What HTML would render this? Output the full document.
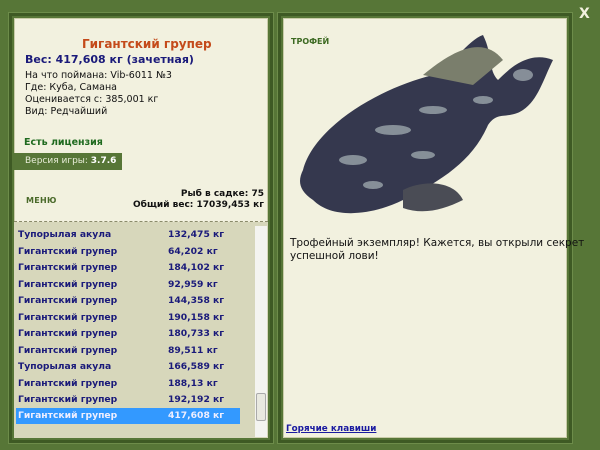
<!DOCTYPE html>
<html><head><meta charset="utf-8"><style>
*{margin:0;padding:0;box-sizing:border-box}
body{width:600px;height:450px;background:#577637;font-family:Tahoma,"DejaVu Sans","Liberation Sans",sans-serif;position:relative;overflow:hidden}
.frame{position:absolute;border:3px solid #3e5a24;box-shadow:0 0 0 1px #6d8c4a}
.in{position:absolute;background:#f2f1df;border:1px solid #c9cca8}
.a{position:absolute;white-space:nowrap}
.b{font-weight:bold}
.row{position:absolute;left:16px;width:224px;height:16px;font-size:9.2px;font-weight:bold;color:#1a1a7a;line-height:16px}
.row span{position:absolute;left:2px}
.row i{font-style:normal;position:absolute;left:152px}
</style></head><body>
<div class="frame" style="left:9px;top:13px;width:264px;height:430px"></div>
<div class="in" style="left:14px;top:18px;width:254px;height:420px"></div>
<div class="frame" style="left:278px;top:13px;width:294px;height:430px"></div>
<div class="in" style="left:283px;top:18px;width:284px;height:420px"></div>
<div class="a b" style="left:579px;top:6px;color:#f2f1df;font-size:14px">X</div>

<div class="a" style="left:82px;top:37px;color:#c44a1a;font-size:12px;font-weight:bold">Гигантский групер</div>
<div class="a b" style="left:25px;top:53px;color:#1a1a7a;font-size:11px">Вес: 417,608 кг (зачетная)</div>
<div class="a" style="left:25px;top:70px;font-size:9.5px;line-height:12px;color:#111">На что поймана: Vib-6011 №3<br>Где: Куба, Самана<br>Оценивается с: 385,001 кг<br>Вид: Редчайший</div>
<div class="a b" style="left:24px;top:137px;color:#1f6a1f;font-size:9.5px">Есть лицензия</div>
<div class="a" style="left:14px;top:153px;width:108px;height:17px;background:#577637;color:#e8edd8;font-size:9px;line-height:17px;padding-left:11px">Версия игры: <b style="color:#fff">3.7.6</b></div>
<div class="a b" style="left:26px;top:196px;color:#4a6a2a;font-size:8px;letter-spacing:0.3px">МЕНЮ</div>
<div class="a b" style="left:110px;top:189px;width:154px;text-align:right;font-size:9px;line-height:11px;color:#111">Рыб в садке: 75<br>Общий вес: 17039,453 кг</div>
<div class="a" style="left:14px;top:221px;width:254px;border-top:1px dashed #8a8a6a"></div>
<div class="a" style="left:14px;top:222px;width:254px;height:216px;background:#d7d7bb"></div>
<div class="a" style="left:255px;top:226px;width:12px;height:211px;background:#f4f4f0"></div>
<div class="a" style="left:256px;top:393px;width:10px;height:28px;background:#e9e9e0;border:1px solid #aaa;border-radius:2px"></div>
<div class="row" style="top:227px"><span>Тупорылая акула</span><i>132,475 кг</i></div>
<div class="row" style="top:243.5px"><span>Гигантский групер</span><i>64,202 кг</i></div>
<div class="row" style="top:260px"><span>Гигантский групер</span><i>184,102 кг</i></div>
<div class="row" style="top:276.5px"><span>Гигантский групер</span><i>92,959 кг</i></div>
<div class="row" style="top:293px"><span>Гигантский групер</span><i>144,358 кг</i></div>
<div class="row" style="top:309.5px"><span>Гигантский групер</span><i>190,158 кг</i></div>
<div class="row" style="top:326px"><span>Гигантский групер</span><i>180,733 кг</i></div>
<div class="row" style="top:342.5px"><span>Гигантский групер</span><i>89,511 кг</i></div>
<div class="row" style="top:359px"><span>Тупорылая акула</span><i>166,589 кг</i></div>
<div class="row" style="top:375.5px"><span>Гигантский групер</span><i>188,13 кг</i></div>
<div class="row" style="top:392px"><span>Гигантский групер</span><i>192,192 кг</i></div>
<div class="row" style="top:408px;background:#3399ff;color:#eef"><span>Гигантский групер</span><i>417,608 кг</i></div>

<div class="a b" style="left:291px;top:37px;color:#3d6a22;font-size:8px">ТРОФЕЙ</div>
<svg class="a" style="left:283px;top:30px" width="284" height="200" viewBox="0 0 284 200">
<path d="M20 140 C30 100 90 60 150 45 C170 35 185 10 200 5 C210 25 205 40 215 50 C225 40 245 20 270 30 C260 50 255 70 240 80 C225 90 215 80 205 95 C190 130 160 150 120 170 C90 185 50 190 30 170 C15 160 15 150 20 140Z" fill="#35384e"/>
<path d="M140 45 C170 20 200 5 220 30 L190 55Z" fill="#7a7e6c"/>
<path d="M120 160 C140 150 170 150 180 170 C160 180 140 185 120 178Z" fill="#4a4c55"/>
<g fill="#a9b4b8" opacity=".7">
<ellipse cx="70" cy="130" rx="14" ry="5"/><ellipse cx="110" cy="100" rx="18" ry="5"/><ellipse cx="150" cy="80" rx="14" ry="4"/><ellipse cx="200" cy="70" rx="10" ry="4"/><ellipse cx="90" cy="155" rx="10" ry="4"/><ellipse cx="140" cy="125" rx="12" ry="4"/><ellipse cx="240" cy="45" rx="10" ry="6"/>
</g>
</svg>
<div class="a" style="left:290px;top:237px;font-size:10.5px;line-height:13px;color:#111">Трофейный экземпляр! Кажется, вы открыли секрет<br>успешной лови!</div>
<div class="a b" style="left:286px;top:424px;font-size:8.8px;color:#1a1aa0;text-decoration:underline">Горячие клавиши</div>
</body></html>
